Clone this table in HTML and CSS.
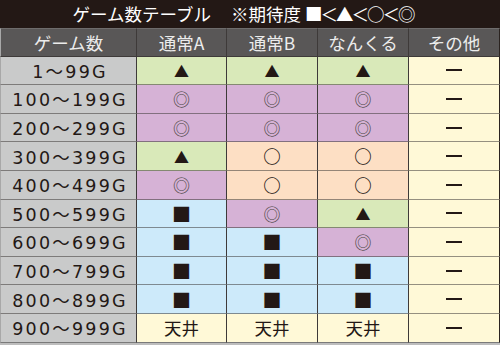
FILE: index.html
```html
<!DOCTYPE html>
<html lang="ja">
<head>
<meta charset="utf-8">
<link rel="stylesheet" href="styles.css">
</head>
<body>
<div class="board">
  <div class="title">ゲーム数テーブル<span class="note">※期待度 <span class="legend">■＜▲＜○＜◎</span></span></div>
  <div class="grid">
    <div class="cell head">ゲーム数</div>
    <div class="cell head">通常A</div>
    <div class="cell head">通常B</div>
    <div class="cell head">なんくる</div>
    <div class="cell head">その他</div>

    <div class="cell games">1～99G</div>
    <div class="cell green"><span class="tri">▲</span></div>
    <div class="cell green"><span class="tri">▲</span></div>
    <div class="cell green"><span class="tri">▲</span></div>
    <div class="cell cream"><span class="dash"></span></div>

    <div class="cell games">100～199G</div>
    <div class="cell purple"><span class="dbl">◎</span></div>
    <div class="cell purple"><span class="dbl">◎</span></div>
    <div class="cell purple"><span class="dbl">◎</span></div>
    <div class="cell cream"><span class="dash"></span></div>

    <div class="cell games">200～299G</div>
    <div class="cell purple"><span class="dbl">◎</span></div>
    <div class="cell purple"><span class="dbl">◎</span></div>
    <div class="cell purple"><span class="dbl">◎</span></div>
    <div class="cell cream"><span class="dash"></span></div>

    <div class="cell games">300～399G</div>
    <div class="cell green"><span class="tri">▲</span></div>
    <div class="cell peach"><span class="ring">○</span></div>
    <div class="cell peach"><span class="ring">○</span></div>
    <div class="cell cream"><span class="dash"></span></div>

    <div class="cell games">400～499G</div>
    <div class="cell purple"><span class="dbl">◎</span></div>
    <div class="cell peach"><span class="ring">○</span></div>
    <div class="cell peach"><span class="ring">○</span></div>
    <div class="cell cream"><span class="dash"></span></div>

    <div class="cell games">500～599G</div>
    <div class="cell blue"><span class="sq">■</span></div>
    <div class="cell purple"><span class="dbl">◎</span></div>
    <div class="cell green"><span class="tri">▲</span></div>
    <div class="cell cream"><span class="dash"></span></div>

    <div class="cell games">600～699G</div>
    <div class="cell blue"><span class="sq">■</span></div>
    <div class="cell blue"><span class="sq">■</span></div>
    <div class="cell purple"><span class="dbl">◎</span></div>
    <div class="cell cream"><span class="dash"></span></div>

    <div class="cell games">700～799G</div>
    <div class="cell blue"><span class="sq">■</span></div>
    <div class="cell blue"><span class="sq">■</span></div>
    <div class="cell blue"><span class="sq">■</span></div>
    <div class="cell cream"><span class="dash"></span></div>

    <div class="cell games">800～899G</div>
    <div class="cell blue"><span class="sq">■</span></div>
    <div class="cell blue"><span class="sq">■</span></div>
    <div class="cell blue"><span class="sq">■</span></div>
    <div class="cell cream"><span class="dash"></span></div>

    <div class="cell games last">900～999G</div>
    <div class="cell cream last">天井</div>
    <div class="cell cream last">天井</div>
    <div class="cell cream last">天井</div>
    <div class="cell cream last"><span class="dash"></span></div>
  </div>
</div>
</body>
</html>
```

FILE: styles.css
```css
html, body {
  margin: 0;
  padding: 0;
  background: #c4c4c4;
}
body {
  font-family: "Noto Sans CJK JP", "Noto Sans", sans-serif;
  color: #231815;
}
.board {
  width: 500px;
  height: 345px;
  overflow: hidden;
  background: #bdbdbd;
}
.title {
  height: 28px;
  background: #231815;
  color: #fff;
  font-size: 17.5px;
  line-height: 28px;
  display: flex;
  justify-content: center;
  gap: 20px;
  padding-right: 14px;
}
.note {
  display: flex;
}
.legend {
  letter-spacing: -2px;
  margin-left: 4px;
}
.grid {
  display: grid;
  grid-template-columns: 137px 90px 91px 91px 91px;
  grid-template-rows: repeat(11, 28.6px);
}
.cell {
  box-sizing: border-box;
  display: flex;
  align-items: center;
  justify-content: center;
  border-right: 1px solid #3e3a39;
  border-bottom: 1px solid rgba(62, 58, 57, 0.55);
  font-size: 17.5px;
}
.cell:nth-child(5n) {
  border-right: 1px solid #2a2320;
}
.head {
  background: #595757;
  color: #ececec;
  border-bottom: 1px solid #3e3a39;
  border-top: 1px solid #6e6c6c;
}
.head:first-child,
.games {
  border-left: 1px solid #a8a8a8;
}
.games {
  background: #c9caca;
  font-family: "DejaVu Sans", "Noto Sans CJK JP", sans-serif;
  font-size: 17.5px;
  letter-spacing: 2.2px;
  padding-left: 3px;
}
.last {
  border-bottom: 1px solid #7a7a7a;
}
.green { background: #d9e9b9; }
.purple { background: #d6b2d6; }
.peach { background: #fddfc4; }
.blue { background: #cdeafa; }
.cream { background: #fff9d7; }

.tri {
  font-size: 15px;
  line-height: 1;
}
.sq {
  font-size: 19px;
  line-height: 1;
}
.dbl {
  font-size: 17px;
  line-height: 1;
  color: #4a4442;
}
.ring {
  font-size: 17.5px;
  font-weight: 700;
  line-height: 1;
  color: #231815;
}
.dash {
  display: block;
  width: 16px;
  height: 2px;
  background: #231815;
}
```
